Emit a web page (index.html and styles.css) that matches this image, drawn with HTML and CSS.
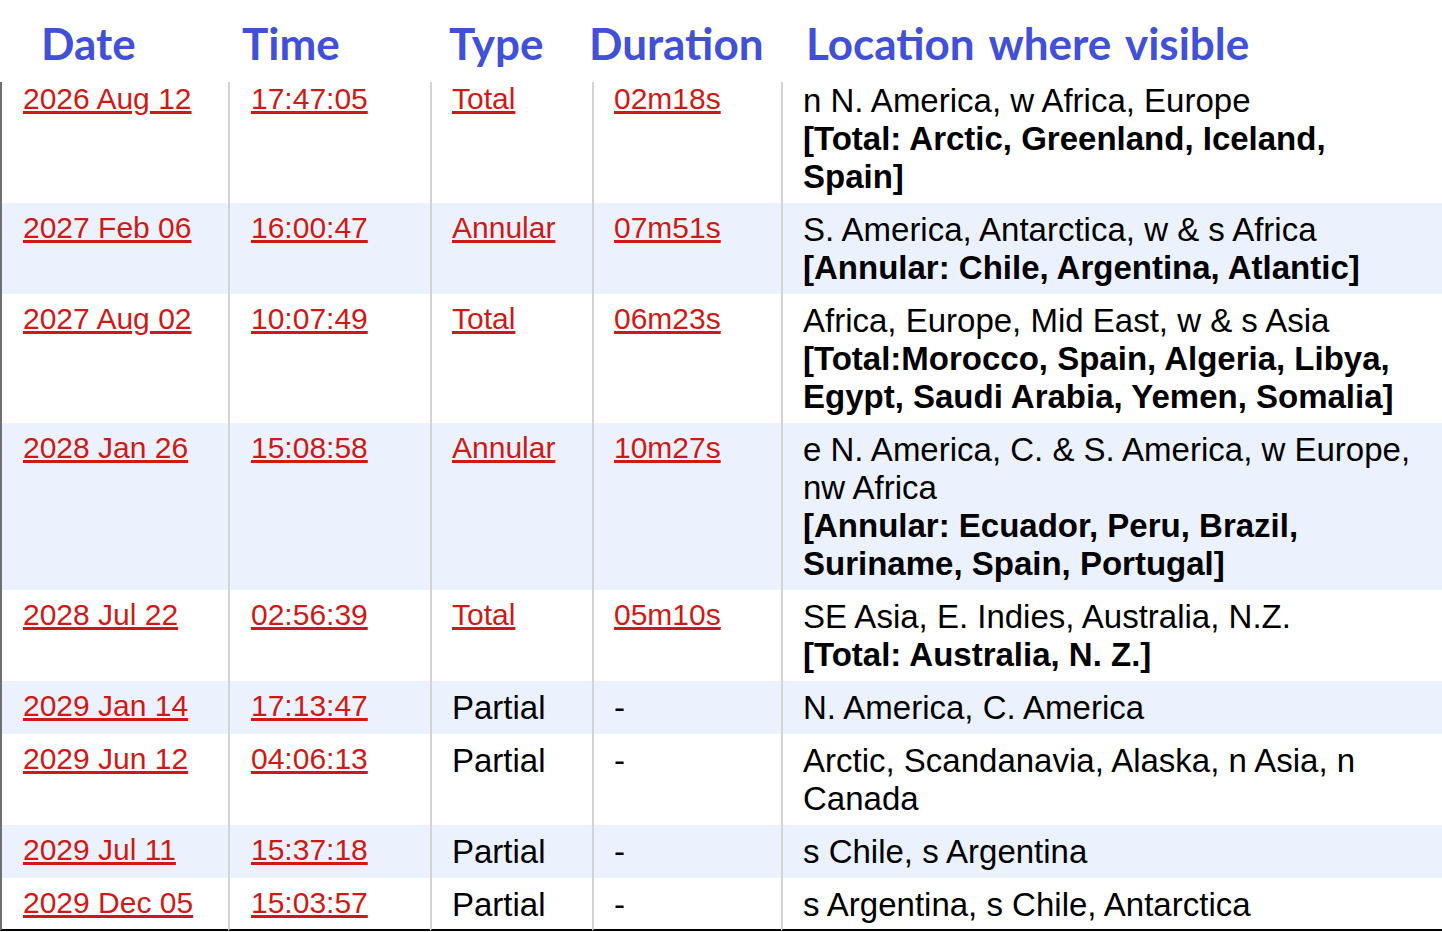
FILE: index.html
```html
<!DOCTYPE html>
<html lang="en">
<head>
<meta charset="utf-8">
<title>Solar Eclipses</title>
<link rel="stylesheet" href="styles.css">
</head>
<body>
<div class="head">
  <span class="h">Date</span>
  <span class="h">Time</span>
  <span class="h">Type</span>
  <span class="h">Duration</span>
  <span class="h">Location where visible</span>
</div>
<table class="eclipses">
  <colgroup>
    <col class="c-date"><col class="c-time"><col class="c-type"><col class="c-dur"><col class="c-loc">
  </colgroup>
  <tbody>
    <tr class="first">
      <td class="date link"><a href="#">2026 Aug 12</a></td>
      <td class="time link"><a href="#">17:47:05</a></td>
      <td class="type link"><a href="#">Total</a></td>
      <td class="dur link"><a href="#">02m18s</a></td>
      <td class="loc">n N. America, w Africa, Europe<br><b>[Total: Arctic, Greenland, Iceland, Spain]</b></td>
    </tr>
    <tr class="alt">
      <td class="date link"><a href="#">2027 Feb 06</a></td>
      <td class="time link"><a href="#">16:00:47</a></td>
      <td class="type link"><a href="#">Annular</a></td>
      <td class="dur link"><a href="#">07m51s</a></td>
      <td class="loc">S. America, Antarctica, w &amp; s Africa<br><b>[Annular: Chile, Argentina, Atlantic]</b></td>
    </tr>
    <tr>
      <td class="date link"><a href="#">2027 Aug 02</a></td>
      <td class="time link"><a href="#">10:07:49</a></td>
      <td class="type link"><a href="#">Total</a></td>
      <td class="dur link"><a href="#">06m23s</a></td>
      <td class="loc">Africa, Europe, Mid East, w &amp; s Asia<br><b>[Total:Morocco, Spain, Algeria, Libya, Egypt, Saudi Arabia, Yemen, Somalia]</b></td>
    </tr>
    <tr class="alt">
      <td class="date link"><a href="#">2028 Jan 26</a></td>
      <td class="time link"><a href="#">15:08:58</a></td>
      <td class="type link"><a href="#">Annular</a></td>
      <td class="dur link"><a href="#">10m27s</a></td>
      <td class="loc">e N. America, C. &amp; S. America, w Europe, nw Africa<br><b>[Annular: Ecuador, Peru, Brazil, Suriname, Spain, Portugal]</b></td>
    </tr>
    <tr>
      <td class="date link"><a href="#">2028 Jul 22</a></td>
      <td class="time link"><a href="#">02:56:39</a></td>
      <td class="type link"><a href="#">Total</a></td>
      <td class="dur link"><a href="#">05m10s</a></td>
      <td class="loc">SE Asia, E. Indies, Australia, N.Z.<br><b>[Total: Australia, N. Z.]</b></td>
    </tr>
    <tr class="alt">
      <td class="date link"><a href="#">2029 Jan 14</a></td>
      <td class="time link"><a href="#">17:13:47</a></td>
      <td class="type">Partial</td>
      <td class="dur">-</td>
      <td class="loc">N. America, C. America</td>
    </tr>
    <tr>
      <td class="date link"><a href="#">2029 Jun 12</a></td>
      <td class="time link"><a href="#">04:06:13</a></td>
      <td class="type">Partial</td>
      <td class="dur">-</td>
      <td class="loc">Arctic, Scandanavia, Alaska, n Asia, n Canada</td>
    </tr>
    <tr class="alt">
      <td class="date link"><a href="#">2029 Jul 11</a></td>
      <td class="time link"><a href="#">15:37:18</a></td>
      <td class="type">Partial</td>
      <td class="dur">-</td>
      <td class="loc">s Chile, s Argentina</td>
    </tr>
    <tr class="last">
      <td class="date link"><a href="#">2029 Dec 05</a></td>
      <td class="time link"><a href="#">15:03:57</a></td>
      <td class="type">Partial</td>
      <td class="dur">-</td>
      <td class="loc">s Argentina, s Chile, Antarctica</td>
    </tr>
  </tbody>
</table>
</body>
</html>
```
FILE: styles.css
```css
html, body {
  margin: 0;
  padding: 0;
  background: #ffffff;
  overflow: hidden;
}

body {
  font-family: "Liberation Sans", Arial, sans-serif;
  color: #000;
}

.head {
  display: grid;
  grid-template-columns: 201px 207px 140px 217px auto;
  padding-left: 41px;
  padding-top: 5px;
  height: 77px;
  line-height: 77px;
  font-family: Lato, "Open Sans", sans-serif;
  font-weight: 700;
  font-size: 44px;
  word-spacing: 4px;
  color: #4150d6;
  white-space: nowrap;
}

.eclipses {
  width: 1442px;
  table-layout: fixed;
  border-collapse: separate;
  border-spacing: 0;
  font-size: 33px;
  line-height: 38px;
}

.c-date { width: 228px; }
.c-time { width: 202px; }
.c-type { width: 162px; }
.c-dur  { width: 189px; }
.c-loc  { width: 661px; }

.eclipses td {
  vertical-align: top;
  padding: 7.5px 0 7.5px 20px;
  border-left: 2px solid #d4d4d4;
}

.eclipses td.link {
  font-size: 30px;
  line-height: 34px;
}

.eclipses td.date {
  border-left: 2px solid #707070;
  padding-left: 21px;
}

.eclipses td.time {
  padding-left: 21px;
}

.eclipses td.loc {
  padding-right: 14px;
}

.eclipses tr.first td {
  padding-top: 0;
  padding-bottom: 7px;
}

.eclipses tr.last td {
  padding-bottom: 5.5px;
  border-bottom: 2px solid #000;
}

.eclipses tr.alt td {
  background: #ebf1fd;
}

.eclipses a {
  color: #cc1b17;
  text-decoration: underline;
}

.eclipses b {
  font-weight: 700;
}
```
